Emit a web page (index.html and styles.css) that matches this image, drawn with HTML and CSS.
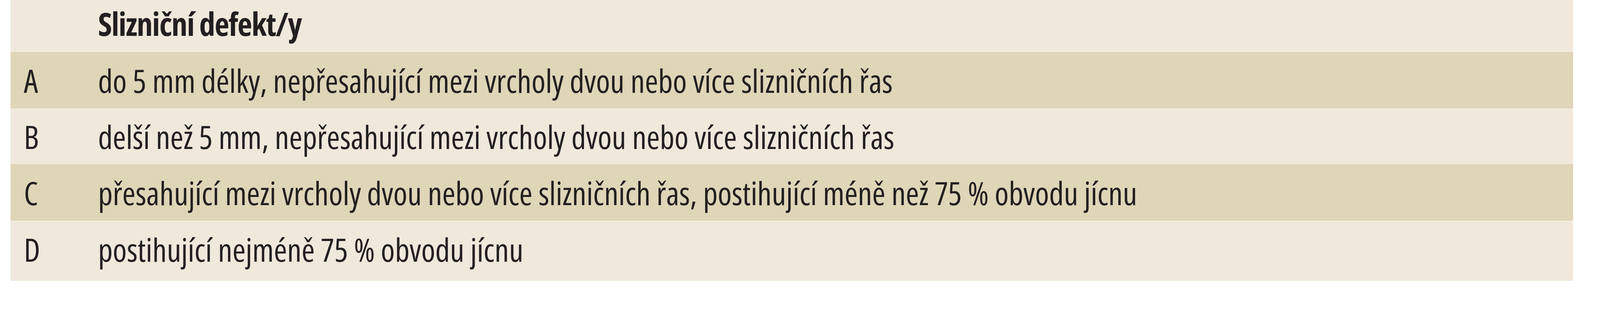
FILE: index.html
```html
<!DOCTYPE html>
<html lang="cs">
<head>
<meta charset="utf-8">
<title>Slizniční defekt/y</title>
<link rel="stylesheet" href="styles.css">
</head>
<body>
<div class="table">
  <div class="row head">
    <div class="cell label"></div>
    <div class="cell text">Slizniční defekt/y</div>
  </div>
  <div class="row dark">
    <div class="cell label">A</div>
    <div class="cell text">do 5 mm délky, nepřesahující mezi vrcholy dvou nebo více slizničních řas</div>
  </div>
  <div class="row light">
    <div class="cell label">B</div>
    <div class="cell text">delší než 5 mm, nepřesahující mezi vrcholy dvou nebo více slizničních řas</div>
  </div>
  <div class="row dark">
    <div class="cell label">C</div>
    <div class="cell text">přesahující mezi vrcholy dvou nebo více slizničních řas, postihující méně než 75 % obvodu jícnu</div>
  </div>
  <div class="row light last">
    <div class="cell label">D</div>
    <div class="cell text">postihující nejméně 75 % obvodu jícnu</div>
  </div>
</div>
</body>
</html>
```
FILE: styles.css
```css
html, body {
  margin: 0;
  padding: 0;
  background: #ffffff;
}

.table {
  margin-left: 27px;
  width: 4000px;
  display: flex;
  flex-direction: column;
  font-family: "Open Sans", Lato, sans-serif;
  font-stretch: condensed;
  font-size: 82px;
  line-height: 100px;
  color: #231f20;
}

.row {
  display: grid;
  grid-template-columns: 224px 1fr;
  padding: 23px 0 22px;
  white-space: nowrap;
}

.head {
  background: #efe8db;
  padding: 10px 0 20px;
  border-bottom: 3px solid #f4ede1;
  font-weight: 700;
  letter-spacing: -1.6px;
}

.light {
  background: #efe8db;
  border-top: 2px solid #f4ede2;
  padding-top: 20px;
  padding-bottom: 21px;
}

.dark {
  background: #dfd5b7;
}

.last {
  padding-top: 21px;
  padding-bottom: 31px;
}

.cell.label {
  padding-left: 34px;
}
```
